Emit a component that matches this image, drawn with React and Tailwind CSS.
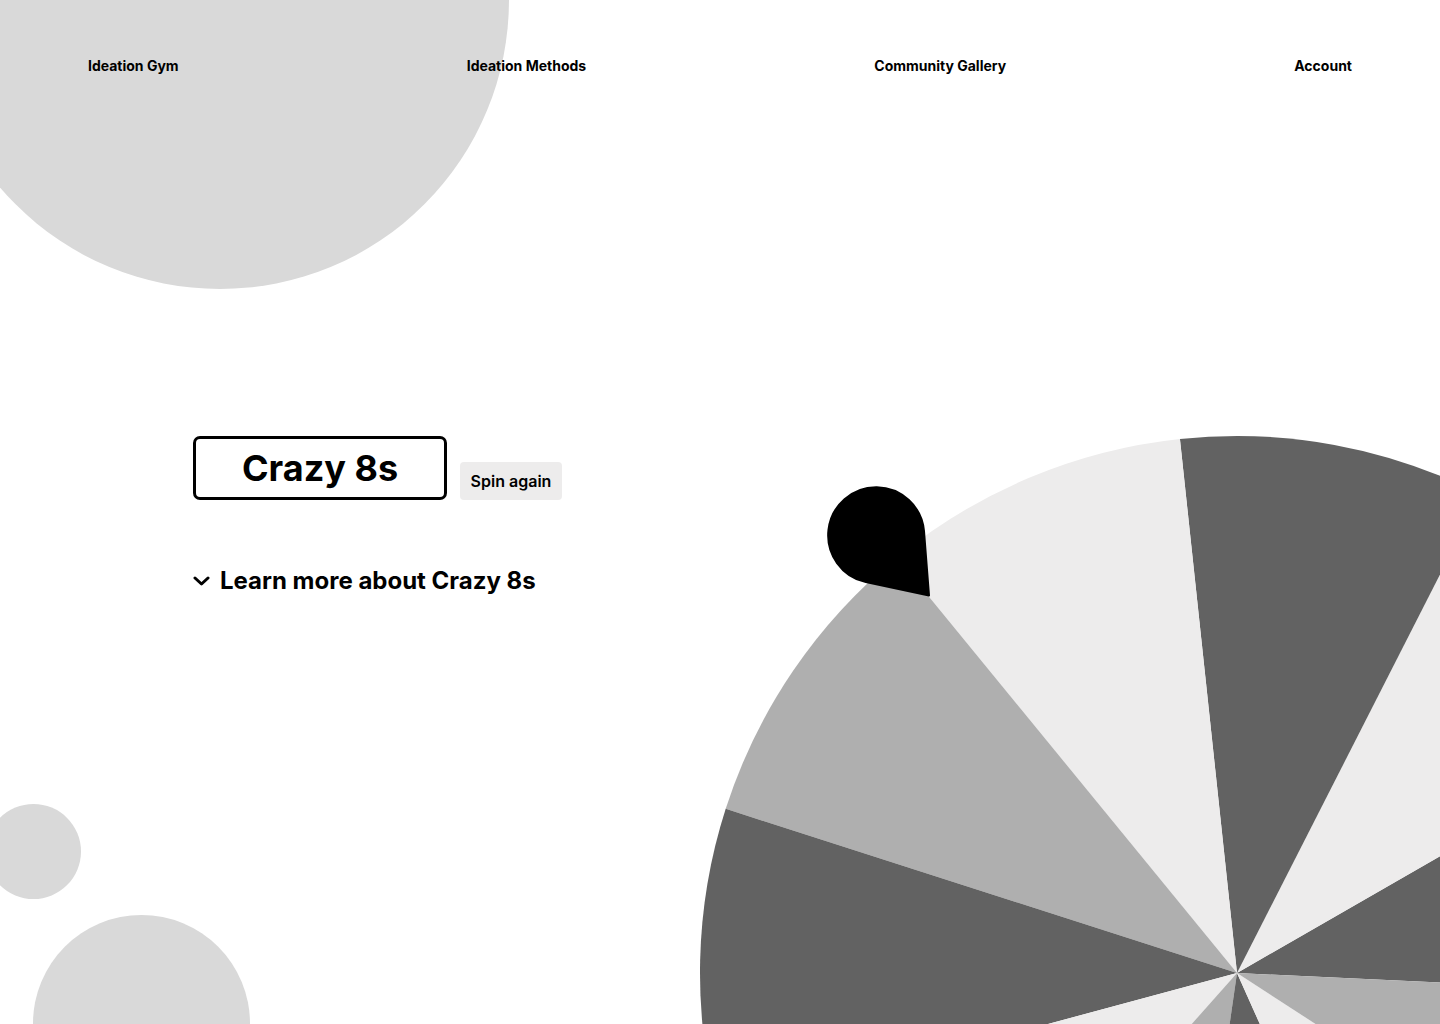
const CX = 1237;
const CY = 973;
const R = 537;

const DARK = "#626262";
const LIGHT = "#edecec";
const GRAY = "#afafaf";

// boundaries in degrees (counter-clockwise, 0 = pointing right)
const edges = [-2.7, 29.9, 63.0, 96.1, 129.3, 162.2, 195.1, 228.4, 261.8, 294.1, 327.0];
const colors = [DARK, LIGHT, DARK, LIGHT, GRAY, DARK, LIGHT, GRAY, DARK, LIGHT, GRAY];

function pt(deg) {
  const a = (deg * Math.PI) / 180;
  return [CX + R * Math.cos(a), CY - R * Math.sin(a)];
}

function Wheel() {
  return (
    <svg className="absolute inset-0 pointer-events-none" width="1440" height="1024" viewBox="0 0 1440 1024">
      {edges.map((a1, i) => {
        const a2 = i === edges.length - 1 ? edges[0] + 360 : edges[i + 1];
        const [x1, y1] = pt(a1);
        const [x2, y2] = pt(a2);
        return (
          <path
            key={i}
            d={`M ${CX} ${CY} L ${x1} ${y1} A ${R} ${R} 0 0 0 ${x2} ${y2} Z`}
            fill={colors[i]}
          />
        );
      })}
      {/* pointer */}
      <path
        d="M 924 531 A 48 48 0 1 0 865.8 582.1 L 929 595.5 Z"
        fill="#000"
        stroke="#000"
        strokeWidth="2"
        strokeLinejoin="round"
      />
    </svg>
  );
}

const navItems = ["Ideation Gym", "Ideation Methods", "Community Gallery", "Account"];

export default function App() {
  return (
    <div className="relative w-[1440px] h-[1024px] overflow-hidden bg-white font-['Inter','Liberation_Sans',sans-serif] text-black">
      {/* background blobs */}
      <div className="absolute left-[-69px] top-[-289px] w-[578px] h-[578px] rounded-full bg-[#d9d9d9]" />
      <div className="absolute left-[-14px] top-[804px] w-[95px] h-[95px] rounded-full bg-[#d9d9d9]" />
      <div className="absolute left-[33px] top-[915px] w-[217px] h-[217px] rounded-full bg-[#d9d9d9]" />
      <Wheel />

      <nav className="relative flex justify-between px-[88px] pt-[56px]">
        {navItems.map((item) => (
          <a key={item} href="#" className="text-[14px] leading-5 font-bold">
            {item}
          </a>
        ))}
      </nav>

      <main className="relative pl-[193px] mt-[360px]">
        <div className="flex items-end gap-[13px]">
          <div className="w-[254px] h-[64px] border-[3px] border-black rounded-[7px] flex items-center justify-center">
            <h1 className="text-[36px] leading-none font-bold">Crazy 8s</h1>
          </div>
          <button className="w-[102px] h-[38px] rounded-[4px] bg-[#edecec] text-[16px] font-semibold">
            Spin again
          </button>
        </div>

        <button className="mt-[67px] flex items-center gap-[10px]">
          <svg width="17" height="10" viewBox="0 0 17 10" fill="none">
            <polyline points="2,2 8.5,8 15,2" stroke="#000" strokeWidth="3" strokeLinecap="round" strokeLinejoin="round" />
          </svg>
          <span className="text-[24px] leading-7 font-bold">Learn more about Crazy 8s</span>
        </button>
      </main>
    </div>
  );
}
